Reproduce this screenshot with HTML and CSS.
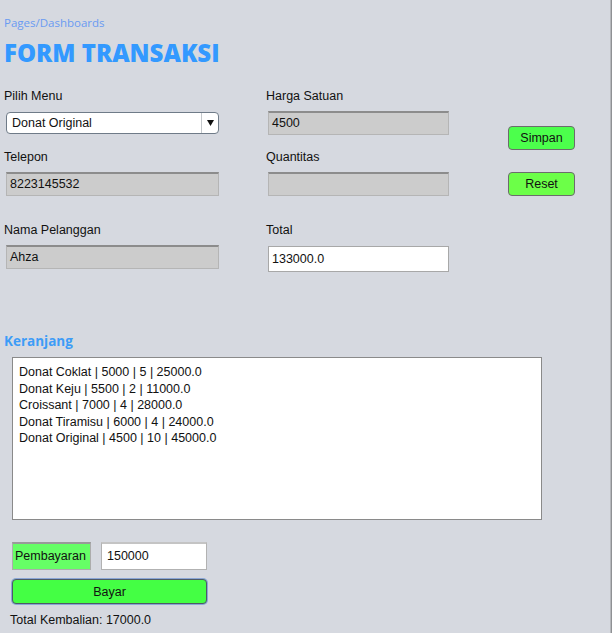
FILE: index.html
```html
<!DOCTYPE html>
<html>
<head>
<meta charset="utf-8">
<link rel="stylesheet" href="styles.css">
</head>
<body>
<div class="frame">
  <main class="page">
    <div class="crumb">Pages/Dashboards</div>
    <h1 class="title">FORM TRANSAKSI</h1>

    <div class="form">
      <div class="cell">
        <div class="label">Pilih Menu</div>
        <div class="combo">
          <span class="combo-text">Donat Original</span>
          <span class="combo-arrow"><svg width="7" height="6" viewBox="0 0 7 6"><path d="M0 0H7L3.5 6Z" fill="#111"/></svg></span>
        </div>
      </div>
      <div class="cell">
        <div class="label">Harga Satuan</div>
        <div class="field gray narrow">4500</div>
      </div>
      <div class="cell">
        <button class="btn btn-simpan">Simpan</button>
      </div>

      <div class="cell">
        <div class="label">Telepon</div>
        <div class="field gray wide">8223145532</div>
      </div>
      <div class="cell">
        <div class="label">Quantitas</div>
        <div class="field gray narrow"></div>
      </div>
      <div class="cell">
        <button class="btn btn-reset">Reset</button>
      </div>

      <div class="cell">
        <div class="label">Nama Pelanggan</div>
        <div class="field gray wide">Ahza</div>
      </div>
      <div class="cell">
        <div class="label">Total</div>
        <div class="field white narrow tall">133000.0</div>
      </div>
      <div class="cell"></div>
    </div>

    <h2 class="section">Keranjang</h2>
    <div class="cart">
      <div>Donat Coklat | 5000 | 5 | 25000.0</div>
      <div>Donat Keju | 5500 | 2 | 11000.0</div>
      <div>Croissant | 7000 | 4 | 28000.0</div>
      <div>Donat Tiramisu | 6000 | 4 | 24000.0</div>
      <div>Donat Original | 4500 | 10 | 45000.0</div>
    </div>

    <div class="pay-row">
      <div class="pay-label">Pembayaran</div>
      <div class="pay-input">150000</div>
    </div>
    <button class="btn-bayar">Bayar</button>
    <div class="change">Total Kembalian: 17000.0</div>
  </main>
  <div class="edge"></div>
</div>
</body>
</html>
```

FILE: styles.css
```css
* { box-sizing: border-box; }
html, body { margin: 0; padding: 0; }
body {
  background: #d6d9e0;
  font-family: "Liberation Sans", Arial, sans-serif;
  font-size: 12.5px;
  color: #111;
  width: 612px;
  height: 633px;
  overflow: hidden;
}
.frame { display: flex; height: 633px; }
.page { width: 610px; padding-left: 4px; }
.edge {
  width: 2px;
  background: #8f9194;
  border-left: 1px solid #b6b8bc;
}
.crumb {
  font-family: "Open Sans", "Noto Sans", sans-serif;
  font-size: 11.5px;
  color: #6a9bf2;
  line-height: 16px;
  margin-top: 15px;
}
.title {
  font-family: "Open Sans", "Noto Sans", sans-serif;
  font-weight: 800;
  font-size: 24px;
  line-height: 30px;
  color: #3399ff;
  margin: 7px 0 0 0;
  letter-spacing: 0;
}
.form {
  display: grid;
  grid-template-columns: 262px 242px 70px;
  grid-template-rows: 61px 73px 60px;
  margin-top: 20px;
}
.label { line-height: 16px; height: 16px; }
.combo {
  margin: 8px 0 0 2px;
  width: 213px;
  height: 22px;
  background: #fff;
  border: 1px solid #6f7b88;
  border-radius: 4px;
  display: flex;
  align-items: center;
}
.combo-text { flex: 1; padding-left: 5px; }
.combo-arrow {
  width: 17px;
  height: 100%;
  border-left: 1px solid #c4c8cc;
  display: flex;
  align-items: center;
  justify-content: center;
}
.field {
  margin: 7px 0 0 2px;
  height: 24px;
  line-height: 21px;
  padding-left: 3px;
  border: 1px solid #b5b5b5;
  border-top: 2px solid #8c8c8c;
}
.gray { background: #cccccc; }
.white { background: #fff; border-top: 1px solid #a0a0a0; border-color: #a8a8a8; line-height: 24px; }
.wide { width: 213px; }
.narrow { width: 181px; }
.tall { height: 26px; margin-top: 8px; }
.btn {
  font-family: "Liberation Sans", Arial, sans-serif;
  font-size: 12.5px;
  width: 67px;
  height: 24px;
  border: 1px solid #6c6c6c;
  border-radius: 4px;
  color: #111;
  padding: 0;
}
.btn-simpan { background: #4cff4c; margin-top: 38px; }
.btn-reset { background: #6cff48; margin-top: 23px; }
.section {
  font-family: "Open Sans", "Noto Sans", sans-serif;
  font-weight: 700;
  font-size: 13.5px;
  color: #3d9cf7;
  margin: 0;
  line-height: 18px;
  margin-top: 50px;
}
.cart {
  margin: 7px 0 0 8px;
  width: 530px;
  height: 163px;
  background: #fff;
  border: 1px solid #8a8a8a;
  padding: 6px 0 0 6px;
  line-height: 16.5px;
}
.pay-row { display: flex; gap: 10px; margin: 22px 0 0 8px; }
.pay-label {
  width: 79px;
  height: 28px;
  background: #66ff66;
  border: 1px solid #acacac;
  border-top: 2px solid #9a9a9a;
  padding-left: 2px;
  line-height: 24px;
}
.pay-input {
  width: 106px;
  height: 28px;
  background: #fff;
  border: 1px solid #b2b2b2;
  border-top: 2px solid #c4c4c4;
  padding-left: 5px;
  line-height: 24px;
}
.btn-bayar {
  display: block;
  margin: 9px 0 0 8px;
  width: 195px;
  height: 25px;
  background: #44ff44;
  border: 1px solid #4f5a66;
  box-shadow: 0 0 0 1px #8aa6d6;
  border-radius: 4px;
  font-family: "Liberation Sans", Arial, sans-serif;
  font-size: 12.5px;
  color: #111;
  padding: 0;
}
.change { margin: 8px 0 0 6px; line-height: 16px; }
```
